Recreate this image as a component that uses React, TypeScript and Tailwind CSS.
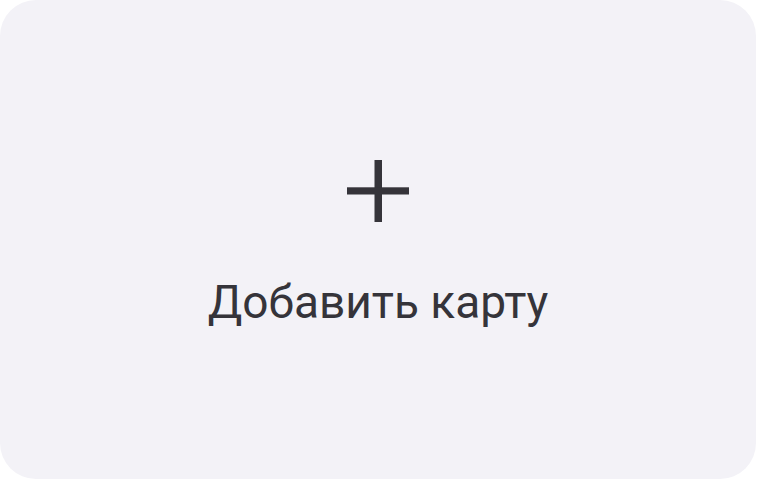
function PlusIcon() {
  return (
    <svg width="62" height="62" viewBox="0 0 62 62" fill="none" aria-hidden>
      <rect x="27.5" y="0" width="7.5" height="62" fill="currentColor" />
      <rect x="0" y="27.3" width="62" height="7.2" fill="currentColor" />
    </svg>
  );
}

export default function App() {
  return (
    <div className="h-[480px] w-[759px] bg-white">
      <button
        type="button"
        className="flex h-[479px] w-[756px] flex-col items-center justify-center rounded-[36px] bg-[#f3f2f7] pt-[10px] text-[#35343a]"
      >
        <PlusIcon />
        <span
          className="mt-[53px] text-[46px] leading-[54px]"
          style={{ fontFamily: 'Roboto, "Noto Sans", sans-serif' }}
        >
          Добавить карту
        </span>
      </button>
    </div>
  );
}
